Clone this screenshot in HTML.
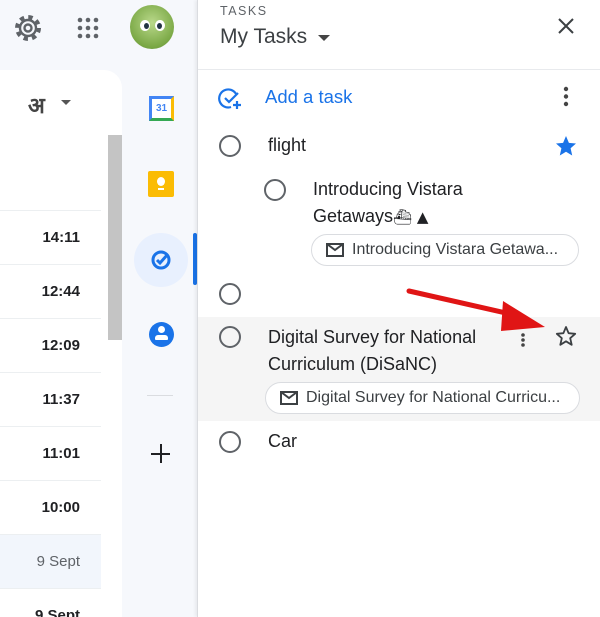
<!DOCTYPE html>
<html style="width:600px;height:617px;overflow:hidden"><head><meta charset="utf-8"><style>
*{margin:0;padding:0;box-sizing:border-box}
body{width:600px;height:617px;overflow:hidden;background:#f6f8fc;font-family:"Liberation Sans",Arial,sans-serif;position:relative}
.abs{position:absolute}
.card{left:0;top:70px;width:122px;height:560px;background:#fff;border-top-right-radius:18px}
.row{position:absolute;left:0;width:101px;height:54px;border-top:1px solid #eceff1;text-align:right;padding-right:21px;line-height:54px;font-size:15px;font-weight:bold;color:#202124}
.panel{left:197px;top:0;width:403px;height:617px;background:#fff;border-left:1px solid #dadce0;box-shadow:-2px 0 3px rgba(0,0,0,.06)}
.circ{position:absolute;width:22px;height:22px;border:2px solid #5f6368;border-radius:50%}
.t{position:absolute;font-size:18px;color:#202124;line-height:27px}
.chip{position:absolute;height:32px;border:1px solid #dadce0;border-radius:16px;font-size:16px;color:#3c4043;line-height:30px;padding-left:40px;white-space:nowrap;overflow:hidden}
.chip svg{position:absolute;left:14px;top:8px}
</style></head><body>
<svg class="abs" style="left:13px;top:13px" width="30" height="30" viewBox="0 0 30 30"><circle cx="15" cy="15" r="10.5" fill="none" stroke="#5f6368" stroke-width="5" stroke-dasharray="4.2 4.04"/><circle cx="15" cy="15" r="8" fill="none" stroke="#5f6368" stroke-width="2.4"/><circle cx="15" cy="15" r="3.5" fill="none" stroke="#5f6368" stroke-width="2.4"/></svg>
<svg class="abs" style="left:76px;top:16px" width="24" height="24" viewBox="0 0 24 24" fill="#5f6368"><circle cx="4" cy="4" r="2.3"/><circle cx="12" cy="4" r="2.3"/><circle cx="20" cy="4" r="2.3"/><circle cx="4" cy="12" r="2.3"/><circle cx="12" cy="12" r="2.3"/><circle cx="20" cy="12" r="2.3"/><circle cx="4" cy="20" r="2.3"/><circle cx="12" cy="20" r="2.3"/><circle cx="20" cy="20" r="2.3"/></svg>
<div class="abs" style="left:130px;top:5px;width:44px;height:44px;border-radius:50%;background:radial-gradient(circle at 50% 40%,#b9d88a,#7aa845 70%,#5d8a3a)"></div>
<div class="abs" style="left:140px;top:20px;width:10px;height:11px;border-radius:50%;background:#fff"></div>
<div class="abs" style="left:155px;top:20px;width:10px;height:11px;border-radius:50%;background:#fff"></div>
<div class="abs" style="left:144px;top:23px;width:5px;height:6px;border-radius:50%;background:#234"></div>
<div class="abs" style="left:157px;top:23px;width:5px;height:6px;border-radius:50%;background:#234"></div>
<div class="abs card"></div>
<div class="abs" style="left:28px;top:88px;font-size:22px;color:#444;font-family:'Noto Sans CJK SC','DejaVu Sans',sans-serif;font-weight:bold">अ</div>
<div class="abs" style="left:61px;top:100px;border-left:5px solid transparent;border-right:5px solid transparent;border-top:5px solid #555"></div>
<div class="abs" style="left:108px;top:135px;width:14px;height:205px;background:#c4c4c4"></div>
<div class="row" style="top:210px">14:11</div>
<div class="row" style="top:264px">12:44</div>
<div class="row" style="top:318px">12:09</div>
<div class="row" style="top:372px">11:37</div>
<div class="row" style="top:426px">11:01</div>
<div class="row" style="top:480px">10:00</div>
<div class="row" style="top:534px;background:#f2f6fc;font-weight:normal;color:#5f6368">9 Sept</div>
<div class="row" style="top:588px">9 Sept</div>
<div class="abs" style="left:149px;top:96px;width:25px;height:25px;background:#fff;border:3px solid #4285f4;border-bottom-color:#34a853;border-right-color:#fbbc04;font-size:10px;color:#4285f4;text-align:center;line-height:19px;font-weight:bold">31</div>
<div class="abs" style="left:148px;top:171px;width:26px;height:26px;background:#fbbc04;border-radius:2px"></div>
<div class="abs" style="left:157px;top:177px;width:8px;height:9px;border-radius:50%;background:#fff"></div>
<div class="abs" style="left:158px;top:188px;width:6px;height:2px;background:#fff"></div>
<div class="abs" style="left:134px;top:233px;width:54px;height:54px;border-radius:50%;background:#e8f0fe"></div>
<svg class="abs" style="left:149px;top:248px" width="24" height="24" viewBox="0 0 24 24"><circle cx="12" cy="12" r="8" fill="none" stroke="#1a73e8" stroke-width="3"/><path d="M8 12l3 3 8-9" fill="none" stroke="#1a73e8" stroke-width="3"/></svg>
<div class="abs" style="left:193px;top:233px;width:4px;height:52px;background:#1a73e8;border-radius:2px"></div>
<div class="abs" style="left:149px;top:322px;width:25px;height:25px;border-radius:50%;background:#1a73e8"></div>
<div class="abs" style="left:158px;top:326px;width:7px;height:7px;border-radius:50%;background:#fff"></div>
<div class="abs" style="left:155px;top:335px;width:13px;height:5px;border-radius:3px 3px 1px 1px;background:#fff"></div>
<div class="abs" style="left:147px;top:395px;width:26px;height:1px;background:#dadce0"></div>
<div class="abs" style="left:151px;top:453px;width:19px;height:2px;background:#202124"></div>
<div class="abs" style="left:160px;top:444px;width:2px;height:19px;background:#202124"></div>
<div class="abs panel">
<div class="abs" style="left:22px;top:4px;font-size:12.5px;letter-spacing:1.5px;color:#5f6368">TASKS</div>
<div class="abs" style="left:22px;top:25px;font-size:21px;color:#3c4043">My Tasks</div>
<div class="abs" style="left:120px;top:35px;border-left:6px solid transparent;border-right:6px solid transparent;border-top:6px solid #444"></div>
<svg class="abs" style="left:359px;top:17px" width="18" height="18" viewBox="0 0 18 18"><path d="M2 2l14 14M16 2L2 16" stroke="#3c4043" stroke-width="2"/></svg>
<div class="abs" style="left:0;top:69px;width:403px;height:1px;background:#e8eaed"></div>
<svg class="abs" style="left:19px;top:86px" width="26" height="26" viewBox="0 0 26 26"><path d="M19 8A9 9 0 1014 21" fill="none" stroke="#1a73e8" stroke-width="2.2"/><path d="M8 12l4 4 9-9" fill="none" stroke="#1a73e8" stroke-width="2.2"/><path d="M20 15v8M16 19h8" stroke="#1a73e8" stroke-width="2.2"/></svg>
<div class="abs" style="left:67px;top:86px;font-size:18.5px;color:#1a73e8">Add a task</div>
<svg class="abs" style="left:365px;top:86px" width="6" height="22" viewBox="0 0 6 22" fill="#444"><circle cx="3" cy="3" r="2.2"/><circle cx="3" cy="10.5" r="2.2"/><circle cx="3" cy="18" r="2.2"/></svg>
<div class="circ" style="left:21px;top:135px"></div>
<div class="t" style="left:70px;top:132px">flight</div>
<svg class="abs" style="left:356px;top:134px" width="24" height="24" viewBox="0 0 24 24"><path fill="#1a73e8" d="M12 2l2.9 6.9 7.1.6-5.4 4.7 1.6 7.3L12 17.7 5.8 21.5l1.6-7.3L2 9.5l7.1-.6z"/></svg>
<div class="circ" style="left:66px;top:179px"></div>
<div class="t" style="left:115px;top:176px">Introducing Vistara<br>Getaways<span style="font-family:'DejaVu Sans';font-size:15px">⛴ ▲</span></div>
<div class="chip" style="left:113px;top:234px;width:268px">
<svg width="18" height="14" viewBox="0 0 18 14"><rect x="1" y="1" width="16" height="12" fill="none" stroke="#3c4043" stroke-width="2"/><path d="M1 1l8 6 8-6" fill="none" stroke="#3c4043" stroke-width="2"/></svg>Introducing Vistara Getawa...</div>
<div class="circ" style="left:21px;top:283px"></div>
<div class="abs" style="left:0;top:317px;width:403px;height:104px;background:#f5f5f5"></div>
<div class="circ" style="left:21px;top:326px"></div>
<div class="t" style="left:70px;top:324px">Digital Survey for National<br>Curriculum (DiSaNC)</div>
<svg class="abs" style="left:322px;top:332px" width="6" height="16" viewBox="0 0 6 16" fill="#444"><circle cx="3" cy="3" r="1.8"/><circle cx="3" cy="8" r="1.8"/><circle cx="3" cy="13" r="1.8"/></svg>
<svg class="abs" style="left:356px;top:324px" width="24" height="24" viewBox="0 0 24 24"><path fill="none" stroke="#3c4043" stroke-width="1.8" stroke-linejoin="round" d="M12 3l2.6 6.2 6.6.6-5 4.4 1.5 6.6L12 17.3l-5.7 3.5 1.5-6.6-5-4.4 6.6-.6z"/></svg>
<div class="chip" style="left:67px;top:382px;width:315px;background:#fff">
<svg width="18" height="14" viewBox="0 0 18 14"><rect x="1" y="1" width="16" height="12" fill="none" stroke="#3c4043" stroke-width="2"/><path d="M1 1l8 6 8-6" fill="none" stroke="#3c4043" stroke-width="2"/></svg>Digital Survey for National Curricu...</div>
<div class="circ" style="left:21px;top:431px"></div>
<div class="t" style="left:70px;top:428px">Car</div>
</div>
<svg class="abs" style="left:405px;top:285px" width="145" height="50" viewBox="0 0 145 50"><path d="M4 6L110 30" stroke="#e01515" stroke-width="5" stroke-linecap="round"/><path d="M98 16L140 42 96 46z" fill="#e01515"/></svg>
</body></html>
